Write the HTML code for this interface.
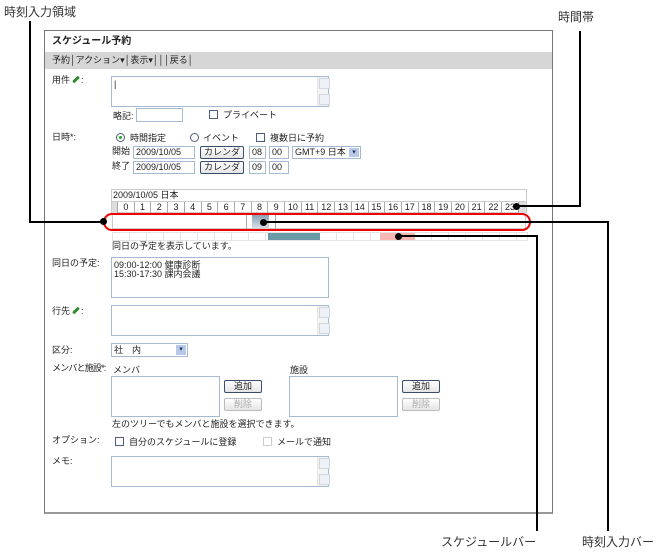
<!DOCTYPE html>
<html><head><meta charset="utf-8"><style>
*{margin:0;padding:0;box-sizing:border-box}
body{width:671px;height:558px;background:#fff;position:relative;overflow:hidden;font-family:"Liberation Sans","Noto Sans CJK JP",sans-serif;font-size:9px;color:#222}
.a{position:absolute;white-space:nowrap;line-height:1}
.box{position:absolute;border:1px solid #a5b9d0;background:#fff}
.sb{position:absolute;right:0;top:0;bottom:0;width:11px;background:#f4f4f4;border-left:1px solid #e4e4e4}
.sb:before,.sb:after{content:"";position:absolute;left:1px;width:9px;height:9px;border:1px solid #cfd6e0;background:#eef1f5}
.sb:before{top:1px}.sb:after{bottom:1px}
.btn{position:absolute;border:1px solid #3a4d6b;border-radius:2px;background:linear-gradient(#fff,#e4e4e4);text-align:center;line-height:11px;font-size:9px}
.btn.d{border-color:#bbb;color:#aaa}
.in{position:absolute;border:1px solid #a5b9d0;background:#fff;line-height:11px;padding-left:2px;font-size:9px}
.cb{position:absolute;width:9px;height:9px;border:1px solid #4d5d7a;background:#fff}
.ln{position:absolute;background:#000}
.dot{position:absolute;width:7px;height:7px;border-radius:50%;background:#000}
.ann{position:absolute;font-size:12px;color:#333;line-height:1;white-space:nowrap}
.pen{display:inline-block;width:8px;height:3px;background:#2f8a2f;transform:rotate(-45deg);margin:0 1px 2px 2px;border-radius:1px}
</style></head><body>
<div style="position:absolute;left:44px;top:30px;width:509px;height:484px;border:1px solid #777;border-bottom:2px solid #999"></div>
<div class="a" style="left:52px;top:37px;font-weight:bold;font-size:10px">スケジュール予約</div>
<div style="position:absolute;left:45px;top:52px;width:507px;height:17px;background:#d6d6d6"></div>
<div class="a" style="left:52px;top:56px">予約│アクション▾│表示▾│││戻る│</div>

<div class="a" style="left:52px;top:76px">用件<span class="pen"></span>:</div>
<div class="box" style="left:111px;top:76px;width:218px;height:31px"><div class="a" style="left:2px;top:3px">|</div><div class="sb"></div></div>
<div class="a" style="left:113px;top:112px">略記:</div>
<div class="in" style="left:136px;top:108px;width:47px;height:14px"></div>
<div class="cb" style="left:209px;top:110px"></div>
<div class="a" style="left:223px;top:111px">プライベート</div>

<div class="a" style="left:52px;top:133px">日時*:</div>
<div style="position:absolute;left:116px;top:133px;width:9px;height:9px;border:1px solid #4d5d7a;border-radius:50%"><div style="position:absolute;left:2px;top:2px;width:3px;height:3px;background:#2a2;border-radius:50%"></div></div>
<div class="a" style="left:130px;top:134px">時間指定</div>
<div style="position:absolute;left:190px;top:133px;width:9px;height:9px;border:1px solid #4d5d7a;border-radius:50%"></div>
<div class="a" style="left:203px;top:134px">イベント</div>
<div class="cb" style="left:256px;top:133px"></div>
<div class="a" style="left:270px;top:134px">複数日に予約</div>
<div class="a" style="left:112px;top:147px">開始</div>
<div class="in" style="left:133px;top:146px;width:62px;height:13px">2009/10/05</div>
<div class="btn" style="left:200px;top:146px;width:44px;height:13px">カレンダ</div>
<div class="in" style="left:249px;top:146px;width:17px;height:13px">08</div>
<div class="in" style="left:269px;top:146px;width:20px;height:13px">00</div>
<div class="in" style="left:292px;top:146px;width:69px;height:13px">GMT+9 日本<span style="position:absolute;right:1px;top:1px;width:10px;height:9px;background:#b8c8e8;font-size:7px;text-align:center;line-height:9px;color:#235">▾</span></div>
<div class="a" style="left:112px;top:162px">終了</div>
<div class="in" style="left:133px;top:161px;width:62px;height:13px">2009/10/05</div>
<div class="btn" style="left:200px;top:161px;width:44px;height:13px">カレンダ</div>
<div class="in" style="left:249px;top:161px;width:17px;height:13px">09</div>
<div class="in" style="left:269px;top:161px;width:20px;height:13px">00</div>

<div style="position:absolute;left:111px;top:189px;width:416px;height:24px;border:1px solid #ccc"></div>
<div class="a" style="left:113px;top:191px">2009/10/05 日本</div>
<div style="position:absolute;left:112px;top:201px;width:414px;height:12px;display:flex;border-top:1px solid #ccc">
<div style="width:6px;border-right:1px solid #aaa;background:#ddd"></div>
<div style="flex:1;display:flex">
<span style="flex:1;border-right:1px solid #aaa;text-align:center;line-height:11px">0</span><span style="flex:1;border-right:1px solid #aaa;text-align:center;line-height:11px">1</span><span style="flex:1;border-right:1px solid #aaa;text-align:center;line-height:11px">2</span><span style="flex:1;border-right:1px solid #aaa;text-align:center;line-height:11px">3</span><span style="flex:1;border-right:1px solid #aaa;text-align:center;line-height:11px">4</span><span style="flex:1;border-right:1px solid #aaa;text-align:center;line-height:11px">5</span><span style="flex:1;border-right:1px solid #aaa;text-align:center;line-height:11px">6</span><span style="flex:1;border-right:1px solid #aaa;text-align:center;line-height:11px">7</span><span style="flex:1;border-right:1px solid #aaa;text-align:center;line-height:11px">8</span><span style="flex:1;border-right:1px solid #aaa;text-align:center;line-height:11px">9</span><span style="flex:1;border-right:1px solid #aaa;text-align:center;line-height:11px">10</span><span style="flex:1;border-right:1px solid #aaa;text-align:center;line-height:11px">11</span><span style="flex:1;border-right:1px solid #aaa;text-align:center;line-height:11px">12</span><span style="flex:1;border-right:1px solid #aaa;text-align:center;line-height:11px">13</span><span style="flex:1;border-right:1px solid #aaa;text-align:center;line-height:11px">14</span><span style="flex:1;border-right:1px solid #aaa;text-align:center;line-height:11px">15</span><span style="flex:1;border-right:1px solid #aaa;text-align:center;line-height:11px">16</span><span style="flex:1;border-right:1px solid #aaa;text-align:center;line-height:11px">17</span><span style="flex:1;border-right:1px solid #aaa;text-align:center;line-height:11px">18</span><span style="flex:1;border-right:1px solid #aaa;text-align:center;line-height:11px">19</span><span style="flex:1;border-right:1px solid #aaa;text-align:center;line-height:11px">20</span><span style="flex:1;border-right:1px solid #aaa;text-align:center;line-height:11px">21</span><span style="flex:1;border-right:1px solid #aaa;text-align:center;line-height:11px">22</span><span style="flex:1;border-right:1px solid #aaa;text-align:center;line-height:11px">23</span>
</div>
<div style="width:7px;background:#ddd"></div></div>
<div style="position:absolute;left:112px;top:214px;width:414px;height:15px;border:1px solid #ccc"></div>
<div style="position:absolute;left:246px;top:214px;width:30px;height:15px;border-left:1px solid #aaa;border-right:1px solid #aaa"></div>
<div style="position:absolute;left:252px;top:215px;width:17px;height:13px;background:linear-gradient(#8aa2b6,#d6dee6)"></div>
<div style="position:absolute;left:103px;top:213px;width:428px;height:18px;border:2px solid #e00;border-radius:9px"></div>
<div style="position:absolute;left:112px;top:232px;width:416px;height:9px;display:flex;border:1px solid #e4e4e4">
<div style="flex:9;background:repeating-linear-gradient(90deg,#fff 0 16px,#e4e4e4 16px 17px)"></div>
<div style="flex:3;background:#6a9aa6"></div>
<div style="flex:3.5;background:repeating-linear-gradient(90deg,#fff 0 16px,#e4e4e4 16px 17px)"></div>
<div style="flex:2;background:#f8b7b7"></div>
<div style="flex:6.5;background:repeating-linear-gradient(90deg,#fff 0 16px,#e4e4e4 16px 17px)"></div>
</div>
<div class="a" style="left:112px;top:242px">同日の予定を表示しています。</div>

<div class="a" style="left:52px;top:259px">同日の予定:</div>
<div class="box" style="left:111px;top:257px;width:218px;height:41px"><div class="a" style="left:2px;top:3px;line-height:9px">09:00-12:00 健康診断<br>15:30-17:30 課内会議</div></div>
<div class="a" style="left:52px;top:307px">行先<span class="pen"></span>:</div>
<div class="box" style="left:111px;top:305px;width:218px;height:31px"><div class="sb"></div></div>
<div class="a" style="left:52px;top:346px">区分:</div>
<div class="in" style="left:111px;top:343px;width:77px;height:14px;line-height:12px">社　内<span style="position:absolute;right:1px;top:1px;width:10px;height:10px;background:#b8c8e8;font-size:7px;text-align:center;line-height:10px;color:#235">▾</span></div>
<div class="a" style="left:52px;top:364px;letter-spacing:-0.8px">メンバと施設*:</div>
<div class="a" style="left:113px;top:366px">メンバ</div>
<div class="a" style="left:290px;top:366px">施設</div>
<div class="box" style="left:111px;top:376px;width:109px;height:41px"></div>
<div class="box" style="left:289px;top:376px;width:109px;height:41px"></div>
<div class="btn" style="left:224px;top:380px;width:38px;height:13px">追加</div>
<div class="btn d" style="left:224px;top:398px;width:38px;height:13px">削除</div>
<div class="btn" style="left:402px;top:380px;width:38px;height:13px">追加</div>
<div class="btn d" style="left:402px;top:398px;width:38px;height:13px">削除</div>
<div class="a" style="left:112px;top:420px">左のツリーでもメンバと施設を選択できます。</div>
<div class="a" style="left:52px;top:436px">オプション:</div>
<div class="cb" style="left:115px;top:437px"></div>
<div class="a" style="left:129px;top:438px">自分のスケジュールに登録</div>
<div class="cb" style="left:263px;top:437px;border-color:#ccc"></div>
<div class="a" style="left:277px;top:438px">メールで通知</div>
<div class="a" style="left:52px;top:457px">メモ:</div>
<div class="box" style="left:111px;top:456px;width:218px;height:31px"><div class="sb"></div></div>

<div class="ann" style="left:4px;top:6px">時刻入力領域</div>
<div class="ln" style="left:29px;top:21px;width:2px;height:202px"></div>
<div class="ln" style="left:29px;top:221px;width:76px;height:2px"></div>
<div class="dot" style="left:100px;top:218px"></div>

<div class="ann" style="left:558px;top:11px">時間帯</div>
<div class="ln" style="left:579px;top:31px;width:2px;height:176px"></div>
<div class="ln" style="left:517px;top:205px;width:64px;height:2px"></div>
<div class="dot" style="left:513px;top:203px"></div>

<div class="dot" style="left:260px;top:219px"></div>
<div class="ln" style="left:263px;top:221px;width:346px;height:2px"></div>
<div class="ln" style="left:607px;top:221px;width:2px;height:310px"></div>
<div class="ann" style="left:582px;top:536px">時刻入力バー</div>

<div class="dot" style="left:395px;top:233px"></div>
<div class="ln" style="left:398px;top:235px;width:140px;height:2px"></div>
<div class="ln" style="left:536px;top:235px;width:2px;height:296px"></div>
<div class="ann" style="left:441px;top:536px">スケジュールバー</div>
</body></html>
